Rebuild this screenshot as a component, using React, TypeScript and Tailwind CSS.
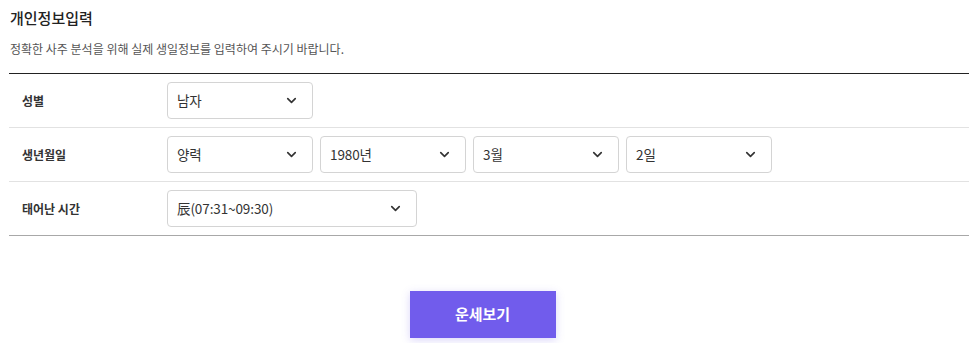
import { ChevronDown } from "lucide-react";

const font = { fontFamily: '"Noto Sans CJK KR", "Noto Sans", sans-serif' };

function Select({ value, wide }: { value: string; wide?: boolean }) {
  return (
    <div
      className={`flex items-center justify-between h-[37px] border border-[#d4d4d4] rounded-[4px] bg-white pl-[9px] pr-[13px] ${
        wide ? "w-[250px]" : "w-[146px]"
      }`}
    >
      <span className="text-[13.5px] text-[#333] tracking-[-0.1px]">{value}</span>
      <ChevronDown size={15} strokeWidth={2.6} className="text-[#333]" />
    </div>
  );
}

function Row({ label, children, last }: { label: string; children: React.ReactNode; last?: boolean }) {
  return (
    <div
      className={`flex items-center h-[54px] border-b ${
        last ? "border-[#a8a8a8]" : "border-[#e2e2e2]"
      }`}
    >
      <div className="w-[158px] pl-[13px] text-[12px] font-bold text-[#333]">{label}</div>
      <div className="flex gap-[7px]">{children}</div>
    </div>
  );
}

export default function App() {
  return (
    <div className="w-[978px] h-[343px] bg-white px-[9px] pt-[6px]" style={font}>
      <h2 className="text-[15px] font-medium text-[#222] leading-[24px] pl-px">개인정보입력</h2>
      <p className="mt-[11px] text-[12px] text-[#555] leading-[16px] pl-px">
        정확한 사주 분석을 위해 실제 생일정보를 입력하여 주시기 바랍니다.
      </p>
      <div className="mt-[16px] border-t border-[#222]">
        <Row label="성별">
          <Select value="남자" />
        </Row>
        <Row label="생년월일">
          <Select value="양력" />
          <Select value="1980년" />
          <Select value="3월" />
          <Select value="2일" />
        </Row>
        <Row label="태어난 시간" last>
          <Select value="辰(07:31~09:30)" wide />
        </Row>
      </div>
      <div className="flex justify-center pr-[13px] mt-[55px]">
        <button className="w-[146px] h-[47px] bg-[#715cec] text-white text-[15px] font-bold shadow-[0_2px_8px_rgba(113,92,236,0.25)]">
          운세보기
        </button>
      </div>
    </div>
  );
}
